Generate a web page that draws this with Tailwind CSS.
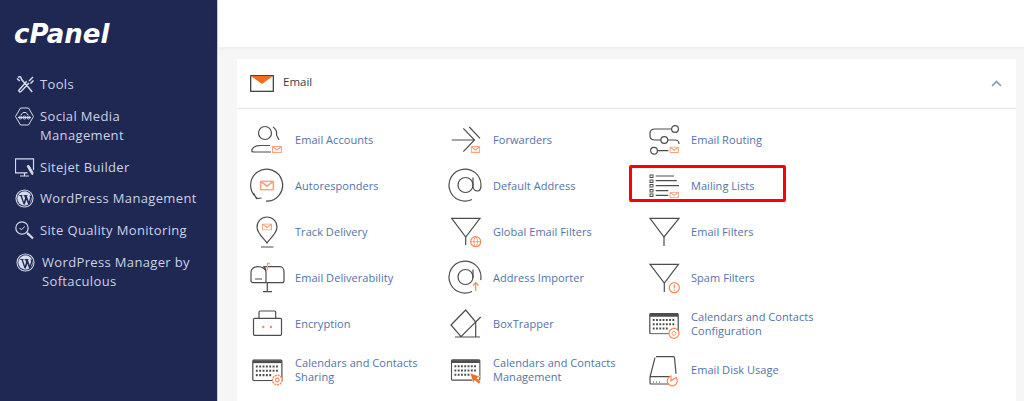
<!DOCTYPE html>
<html lang="en">
<head>
  <meta charset="UTF-8" />
  <title>cPanel - Email</title>
  <script src="https://cdn.jsdelivr.net/npm/@tailwindcss/browser@4"></script>
</head>
<body class="bg-[#f6f6f6] font-['Open_Sans',sans-serif]">
  <!-- shared icon parts -->
  <svg class="hidden" width="0" height="0">
    <symbol id="mail" viewBox="0 0 10 7">
      <rect x=".5" y=".5" width="9" height="6" rx=".5" fill="#fff" stroke="#f9a27d" />
      <path d="M.8.8 5 4l4.200-3.200" fill="none" stroke="#f9a27d" />
    </symbol>
    <symbol id="cal" viewBox="0 0 32 23">
      <path d="M2 .6h28a1.200 1.200 0 0 1 1.200 1.200V21a1.200 1.200 0 0 1-1.200 1.200H2A1.200 1.200 0 0 1 .8 21V1.800A1.200 1.200 0 0 1 2 .6Z" fill="#fff" stroke="#4d4d4d" stroke-width="1.300" />
      <rect x="1" y="1" width="30" height="3" fill="#4d4d4d" />
      <path d="M4 7.500h24M4 12h24M4 16.500h17" fill="none" stroke="#4d4d4d" stroke-width="2.200" stroke-dasharray="2 1.500" />
    </symbol>
    <symbol id="wp" viewBox="0 0 20 20">
      <circle cx="10" cy="10" r="9.500" fill="#d6dbe8" />
      <circle cx="10" cy="10" r="8.400" fill="#1f2753" />
      <circle cx="10" cy="10" r="7.600" fill="#d6dbe8" />
      <path d="M3.800 6.300h4.400v.6l-1 .2 2.200 6.200 1.200-3.500-.9-2.700-.8-.2v-.6h4.500v.6l-1 .2 2.200 6.100 1.100-3.500c.4-1.400-.1-2.100-.8-2.700l3.300-.2-2.900 9-1.300.7-2-5.300-1.900 5.300-1.300-.7-3-8.400-1-.2Z" fill="#1f2753" />
    </symbol>
  </svg>

  <div class="flex h-[401px] overflow-hidden">
    <!-- sidebar -->
    <aside class="w-[218px] shrink-0 bg-[#1f2753] border-r border-[#c9cdd8] text-[#ccd3e2] text-[13px] leading-[19px] tracking-[0.35px]">
      <div class="h-[74px] pl-[14px] pt-[16px] text-white text-[26px] leading-[36px] font-bold italic tracking-[0] font-['DejaVu_Sans',sans-serif]">cPanel</div>
      <nav class="flex flex-col gap-[12.75px] pt-[1px]">
        <a class="flex items-start pl-[15px]">
          <svg class="w-[25px] h-[19px] shrink-0" viewBox="0 0 25 19" fill="none" stroke="#d6dbe8" stroke-width="1.500">
            <path d="M3 2.500c1-1 2.500-.8 3 .2l.6 1.800 7 8 3.600 4.500M4.800 6 2 3.500M14 8l-7.500 8-1.500 1-1.300-1.300 1-1.500 7-8" />
            <path d="m14 6 4-4M15.500 8.500l3-3" />
          </svg>
          <span>Tools</span>
        </a>
        <a class="flex items-start pl-[15px]">
          <svg class="w-[25px] h-[19px] shrink-0" viewBox="0 0 25 19" fill="none" stroke="#d6dbe8" stroke-width="1">
            <path d="M5.500 1h8l5 8.500-5 8.500h-8L.5 9.500Z" />
            <path d="M3 10.500h13M6 8l2-2.500h3L13 8" />
            <circle cx="5.500" cy="10.500" r="1.500" /><circle cx="9.500" cy="10.500" r="1.500" /><circle cx="13.500" cy="10.500" r="1.500" />
          </svg>
          <span>Social Media<br />Management</span>
        </a>
        <a class="flex items-start pl-[15px]">
          <svg class="w-[25px] h-[19px] shrink-0" viewBox="0 0 25 19" fill="none" stroke="#d6dbe8" stroke-width="1">
            <path d="M18.500 12V.8H.5v14h12M5 18h9M9.500 15v3" stroke-width="1.200" />
            <path d="m12 8 4 7 1.500 2 .5-2.500-4-7Z" fill="#d6dbe8" />
          </svg>
          <span>Sitejet Builder</span>
        </a>
        <a class="flex items-start pl-[15px]">
          <svg class="w-[25px] h-[19px] shrink-0" viewBox="0 0 25 19"><use href="#wp" x="0" y="0" width="19" height="19" /></svg>
          <span>WordPress Management</span>
        </a>
        <a class="flex items-start pl-[15px]">
          <svg class="w-[25px] h-[19px] shrink-0" viewBox="0 0 25 19" fill="none" stroke="#d6dbe8">
            <circle cx="7" cy="7" r="6.200" stroke-width="1.200" />
            <path d="m4.500 7 1.800 1.800L9.800 5.500" />
            <path d="m12 12 2 1.500 4 4" stroke-width="2.200" />
          </svg>
          <span>Site Quality Monitoring</span>
        </a>
        <a class="flex items-start pl-[16px]">
          <svg class="w-[26px] h-[19px] shrink-0" viewBox="0 0 26 19"><use href="#wp" x="0" y="0" width="19" height="19" /></svg>
          <span>WordPress Manager by<br />Softaculous</span>
        </a>
      </nav>
    </aside>

    <main class="flex-1 min-w-0">
      <div class="h-[47px] bg-white shadow-[0_1px_4px_rgba(0,0,0,0.06)]"></div>

      <!-- Email card -->
      <section class="ml-[19px] mr-[8px] mt-[12px] bg-white h-[400px]">
        <header class="h-[50px] flex items-center pl-[13px] pr-[14px] border-b border-[#dfe8f2] text-[11.5px] text-[#2f3e4e]">
          <svg class="w-[24px] h-[18px] mr-[9px]" viewBox="0 0 24 18">
            <rect x=".7" y=".7" width="22.600" height="15.600" fill="#fff" stroke="#333" stroke-width="1.200" />
            <path d="M1 1h22l-11 8Z" fill="#f26c21" />
          </svg>
          <span class="flex-1 pb-[3px]">Email</span>
          <svg class="w-[11px] h-[7px]" viewBox="0 0 11 7" fill="none" stroke="#7f9abd" stroke-width="1.600"><path d="m1 6 4.500-4.500L10 6" /></svg>
        </header>

        <div class="grid grid-cols-[198px_198px_198px] auto-rows-[46px] pl-[13px] pt-[7px] text-[11px] leading-[14px] tracking-[0.05px] text-[#5273aa] [&_span]:pt-[2px]">
          <a class="flex items-center">
            <svg class="w-[45px] h-[36px] shrink-0" viewBox="0 0 45 36" fill="none" stroke="#4d4d4d" stroke-width="1.200">
              <circle cx="15" cy="12" r="6.500" />
              <path d="M23 6c3 2 4 5 3.500 8l2.500 5M21 31H4c-2 0-2.500-1-2-2.500C3 26 7 24.500 11 24.500h9" />
              <use href="#mail" x="22" y="25" width="10" height="7" />
            </svg>
            <span>Email Accounts</span>
          </a>
          <a class="flex items-center">
            <svg class="w-[45px] h-[36px] shrink-0" viewBox="0 0 45 36" fill="none" stroke="#4d4d4d" stroke-width="1.200">
              <path d="M3.700 19H26.500M15.300 7.300 26.500 19 15.300 30.700M21.300 6 32 17.300" />
              <use href="#mail" x="22.700" y="25" width="9.500" height="7" />
            </svg>
            <span>Forwarders</span>
          </a>
          <a class="flex items-center">
            <svg class="w-[45px] h-[36px] shrink-0" viewBox="0 0 45 36" fill="none" stroke="#4d4d4d" stroke-width="1.200">
              <circle cx="29" cy="8" r="3.400" /><circle cx="18.300" cy="19" r="3.400" /><circle cx="8" cy="29.700" r="3.400" />
              <path d="M25.600 8H9C6 8 4 9.500 4 12.500v2.500c0 2.500 2 4 5 4h6M21.700 19H29c2.500 0 4 1.500 4 4M11.400 29.700h11" />
              <use href="#mail" x="23.300" y="25.500" width="9.700" height="6.500" />
            </svg>
            <span>Email Routing</span>
          </a>

          <a class="flex items-center">
            <svg class="w-[45px] h-[36px] shrink-0" viewBox="0 0 45 36" fill="none" stroke="#4d4d4d" stroke-width="1.200">
              <path d="M7 31a16 16 0 1 1 9 3.200M3.500 26l3 5.500 5-.5" />
              <use href="#mail" x="9.500" y="13.500" width="15" height="10" />
            </svg>
            <span>Autoresponders</span>
          </a>
          <a class="flex items-center">
            <svg class="w-[45px] h-[36px] shrink-0" viewBox="0 0 45 36" fill="none" stroke="#4d4d4d" stroke-width="1.200">
              <path d="M24 32.500A16 16 0 1 1 33 18c0 3-1 6-3.500 6S25 22 25 19V10.500" />
              <circle cx="17.500" cy="18" r="7.500" />
            </svg>
            <span>Default Address</span>
          </a>
          <a class="relative flex items-center">
            <svg class="w-[45px] h-[36px] shrink-0" viewBox="0 0 45 36" fill="none" stroke="#4d4d4d" stroke-width="1.200">
              <rect x="4" y="8" width="3" height="2.500" stroke-width="1" /><rect x="4" y="13" width="3" height="2.500" stroke-width="1" /><rect x="4" y="17.500" width="3" height="2.500" stroke-width="1" /><rect x="4" y="22.500" width="3" height="2.500" stroke-width="1" /><rect x="4" y="27" width="3" height="2.500" stroke-width="1" />
              <path d="M9.700 9H28M9.700 13.700h21M9.700 18.700H33M9.700 23.700h12.600M9.700 28.300h12.600" />
              <use href="#mail" x="23.300" y="24.700" width="9.700" height="6.500" />
            </svg>
            <span>Mailing Lists</span>
            <div class="absolute left-[-17px] top-[3px] w-[157px] h-[37px] border-[3px] border-[#ff0000] rounded-[2px]"></div>
          </a>

          <a class="flex items-center">
            <svg class="w-[45px] h-[36px] shrink-0" viewBox="0 0 45 36" fill="none" stroke="#4d4d4d" stroke-width="1.200">
              <path d="M17 30c-2-4-10-9-10-16a10 10 0 0 1 20 0c0 7-8 12-10 16ZM11 34h12.500" />
              <use href="#mail" x="12" y="10.500" width="10" height="7" />
            </svg>
            <span>Track Delivery</span>
          </a>
          <a class="flex items-center">
            <svg class="w-[45px] h-[36px] shrink-0" viewBox="0 0 45 36" fill="none" stroke="#4d4d4d" stroke-width="1.200">
              <path d="M3.700 5.300H32L17.700 24ZM17.700 24v8" />
              <circle cx="27.700" cy="28.700" r="5" fill="#fff" stroke="#f9895a" />
              <path d="M22.700 28.700h10M27.700 23.700c-2.500 3-2.500 7 0 10M27.700 23.700c2.500 3 2.500 7 0 10" stroke="#f9895a" stroke-width=".8" />
            </svg>
            <span>Global Email Filters</span>
          </a>
          <a class="flex items-center">
            <svg class="w-[45px] h-[36px] shrink-0" viewBox="0 0 45 36" fill="none" stroke="#4d4d4d" stroke-width="1.200">
              <path d="M4 5.300h29L18 24ZM18 24v9" />
            </svg>
            <span>Email Filters</span>
          </a>

          <a class="flex items-center">
            <svg class="w-[45px] h-[36px] shrink-0" viewBox="0 0 45 36" fill="none" stroke="#4d4d4d" stroke-width="1.200">
              <path d="M16 23.700H3a2 2 0 0 1-2-2V13c0-3 3-5.300 7-5.300s8 2 8 5.300ZM16 12c0-2-1-3-2-4.300h16c2.500 0 4 2.500 4 5.300v8.700a2 2 0 0 1-2 2H16" />
              <path d="M5 20h7M17.300 24v8.700M13 32.700h9" />
              <path d="M17.500 11V4.500H20" stroke="#f9a27d" stroke-width="1.300" />
            </svg>
            <span>Email Deliverability</span>
          </a>
          <a class="flex items-center">
            <svg class="w-[45px] h-[36px] shrink-0" viewBox="0 0 45 36" fill="none" stroke="#4d4d4d" stroke-width="1.200">
              <path d="M24 32.500A16 16 0 1 1 33 18c0 1-.1 2-.4 3M25 19V10.500" />
              <circle cx="17.500" cy="18" r="7.500" />
              <path d="M27.700 32v-8M25 26.500l2.700-2.800 2.700 2.800" stroke="#f9895a" />
            </svg>
            <span>Address Importer</span>
          </a>
          <a class="flex items-center">
            <svg class="w-[45px] h-[36px] shrink-0" viewBox="0 0 45 36" fill="none" stroke="#4d4d4d" stroke-width="1.200">
              <path d="M4 5.300h28.500L18.300 24ZM18.300 24v9" />
              <circle cx="28.300" cy="28.700" r="5" fill="#fff" stroke="#f9895a" />
              <path d="M28.300 25.500v4M28.300 30.600v1.200" stroke="#f9895a" />
            </svg>
            <span>Spam Filters</span>
          </a>

          <a class="flex items-center">
            <svg class="w-[45px] h-[36px] shrink-0" viewBox="0 0 45 36" fill="none" stroke="#4d4d4d" stroke-width="1.200">
              <path d="M4.500 13.300h26a1 1 0 0 1 1 1v15a1 1 0 0 1-1 1h-26a1 1 0 0 1-1-1v-15a1 1 0 0 1 1-1ZM9 13V7a1 1 0 0 1 1-1h14.700a1 1 0 0 1 1 1v6" />
              <circle cx="13.300" cy="22" r="1.200" fill="#f9895a" stroke="none" /><circle cx="21" cy="22" r="1.200" fill="#f9895a" stroke="none" />
            </svg>
            <span>Encryption</span>
          </a>
          <a class="flex items-center">
            <svg class="w-[45px] h-[36px] shrink-0" viewBox="0 0 45 36" fill="none" stroke="#4d4d4d" stroke-width="1.200">
              <path d="M3 20 17.700 5l10 12L13 31.700ZM7 32h25M27.700 17v15M27.700 17l5-5" />
            </svg>
            <span>BoxTrapper</span>
          </a>
          <a class="flex items-center">
            <svg class="w-[45px] h-[36px] shrink-0" viewBox="0 0 45 36" fill="none" stroke="#4d4d4d" stroke-width="1.200">
              <use href="#cal" x="3" y="8" width="30" height="21.500" stroke="none" />
              <circle cx="28" cy="28.300" r="5" fill="#fff" stroke="#f9895a" />
              <circle cx="28" cy="28.300" r="2" stroke="#f9895a" stroke-width=".8" />
            </svg>
            <span>Calendars and Contacts<br />Configuration</span>
          </a>

          <a class="flex items-center">
            <svg class="w-[45px] h-[36px] shrink-0" viewBox="0 0 45 36" fill="none" stroke="#4d4d4d" stroke-width="1.200">
              <use href="#cal" x="1.700" y="8.300" width="31.300" height="22" stroke="none" />
              <circle cx="27.300" cy="29" r="4.800" fill="#fff" stroke="#f9895a" stroke-width="1.500" stroke-dasharray="2 .8" />
              <circle cx="27.300" cy="29" r="1.800" stroke="#f9895a" />
            </svg>
            <span>Calendars and Contacts<br />Sharing</span>
          </a>
          <a class="flex items-center">
            <svg class="w-[45px] h-[36px] shrink-0" viewBox="0 0 45 36" fill="none" stroke="#4d4d4d" stroke-width="1.200">
              <use href="#cal" x="2.700" y="8" width="30" height="22" stroke="none" />
              <path d="m22 22 10 3.500-3.300 1.500 4 4-2 2-4-4-1.300 3.200Z" fill="#f26c21" stroke="#fff" stroke-width=".5" />
            </svg>
            <span>Calendars and Contacts<br />Management</span>
          </a>
          <a class="flex items-center">
            <svg class="w-[45px] h-[36px] shrink-0" viewBox="0 0 45 36" fill="none" stroke="#4d4d4d" stroke-width="1.200">
              <path d="M10 5.700h17.500a1 1 0 0 1 1 1l1.500 16M9 6.700 4 26v6a1 1 0 0 0 1 1h18M4 25.700h20" />
              <path d="M7 31h1M10 31h1M13 31h1" />
              <path d="M30 26.500a5 5 0 1 1-5-1.500v4.800Z" stroke="#f9895a" />
            </svg>
            <span>Email Disk Usage</span>
          </a>
        </div>
      </section>
    </main>
  </div>
</body>
</html>
